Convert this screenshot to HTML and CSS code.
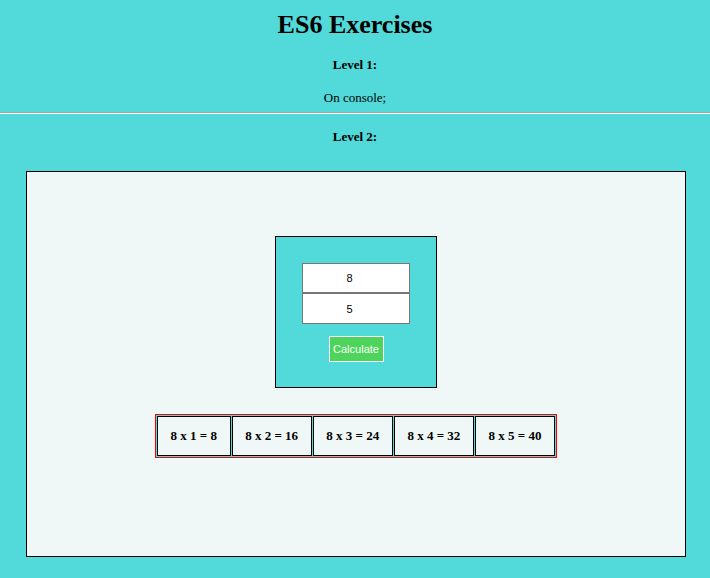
FILE: index.html
```html
<!DOCTYPE html>
<html>
<head>
<meta charset="utf-8">
<link rel="stylesheet" href="styles.css">
</head>
<body>
<h1 class="title">ES6 Exercises</h1>
<h5 class="level level-1">Level 1:</h5>
<p class="note">On console;</p>
<hr class="divider">
<h5 class="level level-2">Level 2:</h5>
<div class="board">
  <div class="card">
    <input class="field field-a" type="text" value="8">
    <input class="field field-b" type="text" value="5">
    <button class="calc">Calculate</button>
  </div>
  <table class="results">
    <tr>
      <td>8 x 1 = 8</td>
      <td>8 x 2 = 16</td>
      <td>8 x 3 = 24</td>
      <td>8 x 4 = 32</td>
      <td>8 x 5 = 40</td>
    </tr>
  </table>
</div>
</body>
</html>
```
FILE: styles.css
```css
html, body {
  margin: 0;
  padding: 0;
}
body {
  background: #52d9da;
  font-family: "Liberation Serif", "Times New Roman", serif;
  color: #000;
  text-align: center;
  padding-bottom: 20px;
}
.title {
  font-size: 26px;
  line-height: 30px;
  font-weight: bold;
  margin: 10px 0 0;
}
.level {
  font-size: 13px;
  line-height: 15px;
  font-weight: bold;
  margin: 0;
}
.level-1 {
  margin-top: 17px;
}
.note {
  font-size: 13px;
  line-height: 15px;
  margin: 18px 0 0;
}
.divider {
  margin: 7px 0 0;
  border: 0;
  border-top: 1px solid #a4a4a4;
  border-bottom: 1px solid #ffffff;
  height: 0;
}
.level-2 {
  margin-top: 15px;
}
.board {
  box-sizing: border-box;
  margin: 27px 24px 0 26px;
  height: 386px;
  border: 1px solid #000;
  background: #f0f8f7;
  display: flex;
  flex-direction: column;
  align-items: center;
  padding-top: 64px;
  gap: 26px;
}
.card {
  box-sizing: border-box;
  width: 162px;
  height: 152px;
  border: 1px solid #000;
  background: #52d9da;
  display: flex;
  flex-direction: column;
  align-items: center;
  padding-top: 26px;
}
.field {
  box-sizing: border-box;
  width: 108px;
  height: 30px;
  margin: 0;
  border: 1px solid #767676;
  background: #fff;
  font-family: "Liberation Sans", Arial, sans-serif;
  font-size: 11px;
  text-align: center;
  padding: 0 13px 0 0;
  color: #000;
}
.field-b {
  height: 31px;
}
.calc {
  box-sizing: border-box;
  margin-top: 12px;
  width: 55px;
  height: 26px;
  padding: 0;
  border: 1px solid #fff;
  background: #4cd55a;
  color: #fff;
  font-family: "Liberation Sans", Arial, sans-serif;
  font-size: 11px;
}
.results {
  border: 1px solid #ff0000;
  border-spacing: 1px;
  background: #52d9da;
}
.results td {
  border: 1px solid #000;
  background: #f0f8f7;
  padding: 11px 12.6px 12px;
  font-size: 13px;
  line-height: 15px;
  font-weight: bold;
  white-space: nowrap;
}
```
